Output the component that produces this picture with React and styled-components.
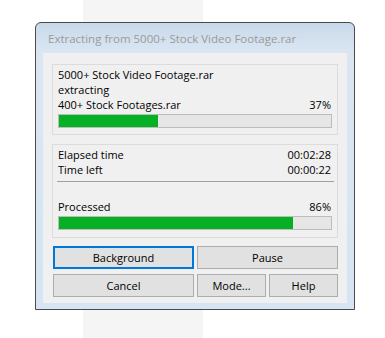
import React from "react";
import styled, { createGlobalStyle } from "styled-components";

const GlobalStyle = createGlobalStyle`
  html, body {
    margin: 0;
    padding: 0;
  }
  body {
    width: 385px;
    height: 338px;
    overflow: hidden;
    background: linear-gradient(
      to right,
      #ffffff 83px,
      #f5f5f5 83px,
      #f5f5f5 203px,
      #ffffff 203px
    );
    font-family: "Segoe UI", "Open Sans", sans-serif;
    font-size: 11px;
    color: #000;
  }
`;

const Page = styled.div`
  padding: 22px 0 0 35px;
`;

const Window = styled.div`
  box-sizing: border-box;
  width: 320px;
  height: 288px;
  border: 1px solid #4a4a4a;
  border-radius: 6px 6px 0 0;
  background: linear-gradient(#c9d9ea 0px, #dbe6f2 30px, #d6e4f3 100%);
  display: flex;
  flex-direction: column;
  padding: 0 7px 6px 7px;
`;

const TitleBar = styled.div`
  height: 30px;
  display: flex;
  align-items: center;
  padding-left: 5px;
  padding-top: 1px;
  box-sizing: border-box;
  color: #9a9a9a;
  font-size: 11.5px;
  white-space: nowrap;
`;

const Client = styled.div`
  flex: 1;
  background: #f0f0f0;
  padding: 11px 9px 0 9px;
  display: flex;
  flex-direction: column;
  gap: 9px;
`;

const Group = styled.div`
  box-sizing: border-box;
  height: ${(p) => p.$h}px;
  border: 1px solid #dcdcdc;
  padding: 2px 4px 0 5px;
  display: flex;
  flex-direction: column;
`;

const Line = styled.div`
  display: flex;
  justify-content: space-between;
  line-height: 15px;
  height: 15px;
  white-space: nowrap;
  padding-right: ${(p) => (p.$inset ? 2 : 0)}px;
`;

const Bar = styled.div`
  box-sizing: border-box;
  height: 14px;
  border: 1px solid #bcbcbc;
  background: #e6e6e6;
  margin-top: 2px;
  margin-right: 1px;
`;

const Fill = styled.div`
  height: 100%;
  background: #06b025;
`;

const Separator = styled.div`
  height: 1px;
  background: #a0a0a0;
  margin: 4px -1px 0 -1px;
`;

const Spacer = styled.div`
  height: ${(p) => p.$h}px;
`;

const ButtonGrid = styled.div`
  display: grid;
  grid-template-columns: 141px 69px 69px;
  column-gap: 3px;
  row-gap: 5px;
  margin-left: 1px;
  margin-top: -1px;
`;

const Button = styled.button`
  box-sizing: border-box;
  height: 23px;
  grid-column: ${(p) => p.$col};
  background: #e1e1e1;
  border: ${(p) => (p.$default ? "2px solid #0078d7" : "1px solid #adadad")};
  font-family: inherit;
  font-size: 11px;
  color: #000;
  padding: 0;
  margin: 0;
  border-radius: 0;
`;

function Progress({ value }) {
  return (
    <Bar>
      <Fill style={{ width: `${value}%` }} />
    </Bar>
  );
}

export default function App() {
  return (
    <>
      <GlobalStyle />
      <Page>
        <Window>
          <TitleBar>Extracting from 5000+ Stock Video Footage.rar</TitleBar>
          <Client>
            <Group $h={71}>
              <Line>5000+ Stock Video Footage.rar</Line>
              <Line>extracting</Line>
              <Line $inset>
                <span>400+ Stock Footages.rar</span>
                <span>37%</span>
              </Line>
              <Progress value={36.5} />
            </Group>
            <Group $h={94}>
              <Line $inset>
                <span>Elapsed time</span>
                <span>00:02:28</span>
              </Line>
              <Line $inset>
                <span>Time left</span>
                <span>00:00:22</span>
              </Line>
              <Separator />
              <Spacer $h={17} />
              <Line $inset>
                <span>Processed</span>
                <span>86%</span>
              </Line>
              <Progress value={86} />
            </Group>
            <ButtonGrid>
              <Button $default $col="1 / 2">Background</Button>
              <Button $col="2 / 4">Pause</Button>
              <Button $col="1 / 2">Cancel</Button>
              <Button $col="2 / 3">Mode...</Button>
              <Button $col="3 / 4">Help</Button>
            </ButtonGrid>
          </Client>
        </Window>
      </Page>
    </>
  );
}
